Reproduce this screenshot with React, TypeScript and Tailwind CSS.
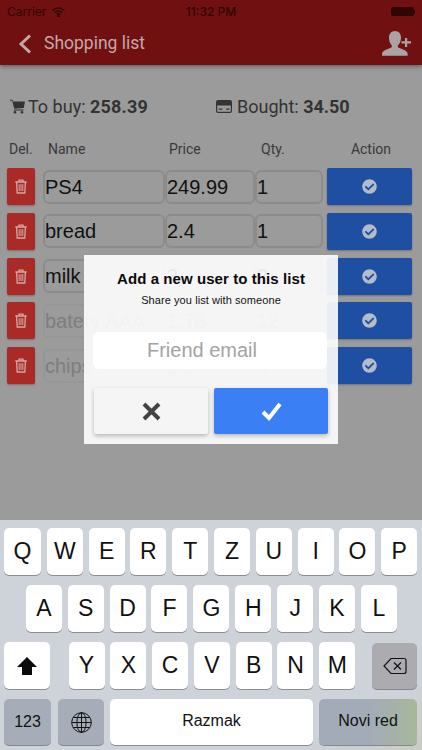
import React from "react";
import { FaCheckCircle } from "react-icons/fa";

const rows = [
  { name: "PS4", price: "249.99", qty: "1", done: false },
  { name: "bread", price: "2.4", qty: "1", done: false },
  { name: "milk", price: "3", qty: "2", done: false },
  { name: "batery AAA", price: "1.76", qty: "12", done: true },
  { name: "chips", price: "1.5", qty: "6", done: true },
];

function Trash() {
  return (
    <svg width="12" height="15" viewBox="0 0 12 15" fill="none" stroke="#d3aaa6" strokeWidth="1.3">
      <path d="M.3 3h11.4M4 3V1.2h4V3M1.6 3l.6 11h7.6l.6-11" />
      <path d="M4.2 5.2v6.8M6 5.2v6.8M7.8 5.2v6.8" strokeWidth="1" />
    </svg>
  );
}

function Cell({ w, text, done }: { w: string; text: string; done: boolean }) {
  return (
    <div
      className={`${w} h-[34px] shrink-0 overflow-hidden whitespace-nowrap rounded-[6px] border-2 text-[20px] leading-[30px] font-['Liberation_Sans',sans-serif] ${
        done ? "border-[#969696] text-[#7e7e7e]" : "border-[#8c8c8c] text-[#111111]"
      }`}
    >
      {text}
    </div>
  );
}

function Row({ name, price, qty, done }: { name: string; price: string; qty: string; done: boolean }) {
  return (
    <div className="flex h-[37px] items-center pl-[7px]">
      <div className="flex h-[37px] w-[28px] items-center justify-center rounded-[2px] bg-[#a92a26] shadow-[0_1px_2px_rgba(0,0,0,0.25)]">
        <Trash />
      </div>
      <div className="ml-[8px] flex">
        <Cell w="w-[122px]" text={name} done={done} />
        <Cell w="w-[90px]" text={price} done={done} />
        <Cell w="w-[68px]" text={qty} done={done} />
      </div>
      <div className="ml-[4px] flex h-[37px] w-[85px] items-center justify-center rounded-[2px] bg-[#1f4fa3] text-[#b4bbc9] shadow-[0_1px_2px_rgba(0,0,0,0.25)]">
        <FaCheckCircle size={15} />
      </div>
    </div>
  );
}

function Key({ label, w = "w-[36px]" }: { label: string; w?: string }) {
  return (
    <div className={`${w} flex h-[47px] items-center justify-center rounded-[5px] bg-white text-[23px] text-[#111] shadow-[0_1px_0_#8a8d92]`}>
      {label}
    </div>
  );
}

function GrayKey({ w, children }: { w: string; children: React.ReactNode }) {
  return (
    <div className={`${w} flex h-[46px] items-center justify-center rounded-[5px] bg-[#a6adb9] text-[#111] shadow-[0_1px_0_#85888d]`}>
      {children}
    </div>
  );
}

export default function App() {
  return (
    <div className="relative flex h-[750px] w-[422px] flex-col overflow-hidden bg-[#9b9b9b] font-['Roboto',sans-serif]">
      <header className="z-10 h-[65px] shrink-0 bg-[#701010] shadow-[0_2px_4px_rgba(0,0,0,0.35)]">
        <div className="flex h-[22px] items-center justify-between px-[7px] pt-[1px] font-['Inter',sans-serif] text-[12px] text-[#2e0606]">
          <div className="flex w-[120px] items-center gap-[6px]">
            <span>Carrier</span>
            <svg width="13" height="10" viewBox="0 0 13 10" fill="none" stroke="#2e0606" strokeWidth="1.6">
              <path d="M.8 3.4a8 8 0 0 1 11.4 0M2.8 5.5a5.2 5.2 0 0 1 7.4 0M4.8 7.4a2.4 2.4 0 0 1 3.4 0" />
              <circle cx="6.5" cy="9" r=".6" fill="#2e0606" />
            </svg>
          </div>
          <span className="font-medium">11:32 PM</span>
          <div className="flex w-[120px] items-center justify-end">
            <div className="h-[9px] w-[23px] rounded-[2px] bg-[#2e0606]" />
            <div className="h-[4px] w-[1px] bg-[#2e0606]" />
          </div>
        </div>
        <div className="flex h-[43px] items-center pl-[18px] pr-[11px] text-[#c4a8a8]">
          <svg width="14" height="20" viewBox="0 0 14 20" fill="none" stroke="#c4a8a8" strokeWidth="3">
            <path d="M12 1.5 3 10l9 8.5" />
          </svg>
          <span className="ml-[12px] text-[17.5px]">Shopping list</span>
          <svg width="29" height="25" viewBox="0 0 29 25" fill="#aaa3a3" className="ml-auto">
            <path d="M13 0c3.6 0 6 2.8 6 6.4 0 3-1 5.8-2.7 7.6-.9 1-.7 2.2.6 2.8 3.2 1.3 6.8 2.4 8.1 4.2.6 1 .7 2.3.7 3.8H0c0-1.5.1-2.8.7-3.8 1.3-1.8 4.9-2.9 8.1-4.2 1.3-.6 1.5-1.8.6-2.8C7.8 12.2 7 9.4 7 6.4 7 2.8 9.4 0 13 0z" />
            <path d="M23 7h2.2v3.300H29v2.300h-3.800V16H23v-3.400h-3.500v-2.300H23z" />
          </svg>
        </div>
      </header>

      <div className="flex h-[66px] shrink-0 items-center pl-[10px] pt-[17px] text-[18px] text-[#333]">
        <div className="flex w-[206px] items-center">
          <svg width="15" height="15" viewBox="0 0 15 15" fill="#333" className="mr-[3px]">
            <path d="M0 .5 2.500 1l.6 1.500H15l-1.200 6.500-9.500.8L2.200 2 0 1.500z" />
            <path d="M4 10.500h9.500v1H3.500z" />
            <circle cx="5" cy="13.300" r="1.300" />
            <circle cx="12" cy="13.300" r="1.300" />
          </svg>
          <span>
            To buy: <b className="font-bold tracking-[0.2px]">258.39</b>
          </span>
        </div>
        <div className="flex items-center">
          <svg width="16" height="13" viewBox="0 0 16 13" className="mr-[5px]">
            <rect x=".6" y=".6" width="14.800" height="11.800" rx="1.500" fill="none" stroke="#333" strokeWidth="1.200" />
            <rect x="1" y="1" width="14" height="4.500" fill="#333" />
            <rect x="2.500" y="8.500" width="4" height="1.200" fill="#333" />
            <rect x="10" y="8.500" width="3.500" height="1.200" fill="#333" />
          </svg>
          <span>
            Bought: <b className="font-bold">34.50</b>
          </span>
        </div>
      </div>

      <div className="flex h-[37px] shrink-0 items-center text-[14px] text-[#393939]">
        <span className="ml-[9px] w-[39px]">Del.</span>
        <span className="w-[121px]">Name</span>
        <span className="w-[92px]">Price</span>
        <span className="w-[62px]">Qty.</span>
        <span className="w-[96px] text-center">Action</span>
      </div>

      <div className="flex flex-col gap-[7.8px]">
        {rows.map((r) => (
          <Row key={r.name} {...r} />
        ))}
      </div>

      <div className="mt-auto shrink-0 bg-gradient-to-br from-[#ced2d9] via-[#ced2d9] via-85% to-[#c9ccc4] pt-[8px] pb-[5px] font-['Liberation_Sans',sans-serif]">
        <div className="flex gap-[5.8px] pl-[4px]">
          {"QWERTZUIOP".split("").map((k) => (
            <Key key={k} label={k} w={k === "Q" ? "w-[37px]" : "w-[36px]"} />
          ))}
        </div>
        <div className="mt-[10px] flex gap-[5.9px] pl-[25.800px]">
          {"ASDFGHJKL".split("").map((k) => (
            <Key key={k} label={k} />
          ))}
        </div>
        <div className="mt-[10px] flex items-center pl-[4px] pr-[5px]">
          <div className="flex h-[47px] w-[46px] items-center justify-center rounded-[5px] bg-white shadow-[0_1px_0_#8a8d92]">
            <svg width="20" height="18" viewBox="0 0 20 18" fill="#0b0b0b">
              <path d="M10 0 20 10h-5v8H5v-8H0z" />
            </svg>
          </div>
          <div className="ml-[18.500px] flex gap-[5.800px]">
            {"YXCVBNM".split("").map((k) => (
              <Key key={k} label={k} />
            ))}
          </div>
          <div className="ml-auto flex h-[46px] w-[45px] items-center justify-center rounded-[5px] bg-[#acacb0] shadow-[0_1px_0_#85888d]">
            <svg width="24" height="18" viewBox="0 0 24 18" fill="none" stroke="#111" strokeWidth="1.2">
              <path d="M8 1.500h13a2 2 0 0 1 2 2v11a2 2 0 0 1-2 2H8L1 9z" />
              <path d="m11 5.500 7 7m0-7-7 7" />
            </svg>
          </div>
        </div>
        <div className="mt-[10px] flex pl-[4px] pr-[5px]">
          <GrayKey w="w-[47px]">
            <span className="text-[16px]">123</span>
          </GrayKey>
          <div className="ml-[7px]">
            <GrayKey w="w-[46px]">
              <svg width="21" height="21" viewBox="0 0 21 21" fill="none" stroke="#111" strokeWidth="1">
                <circle cx="10.500" cy="10.500" r="9.800" />
                <ellipse cx="10.500" cy="10.500" rx="4.600" ry="9.800" />
                <path d="M10.500.7v19.600M.7 10.500h19.600M2.200 5.500h16.600M2.200 15.500h16.600" />
              </svg>
            </GrayKey>
          </div>
          <div className="ml-[6px] flex h-[46px] w-[203px] items-center justify-center rounded-[5px] bg-white pb-[2px] text-[16px] text-[#111] shadow-[0_1px_0_#8a8d92]">
            Razmak
          </div>
          <div className="ml-[6px] flex h-[46px] w-[98px] items-center justify-center rounded-[5px] bg-gradient-to-r from-[#a4abb8] via-[#a4abb8] via-50% to-[#a7b79a] pb-[2px] text-[16px] text-[#111] shadow-[0_1px_0_#85888d]">
            Novi red
          </div>
        </div>
      </div>

      <div className="absolute left-[84px] top-[255px] flex h-[189px] w-[254px] flex-col items-center bg-white/90">
        <h2 className="mt-[14px] font-['Liberation_Sans',sans-serif] text-[15px] font-bold leading-[20px] tracking-[0.08px] text-[#0a0a0a]">
          Add a new user to this list
        </h2>
        <p className="mt-[3px] font-['Liberation_Sans',sans-serif] text-[11px] leading-[16px] tracking-[0.08px] text-[#111]">
          Share you list with someone
        </p>
        <div className="mt-[24px] ml-[9px] flex h-[37px] w-[234px] items-center justify-center self-start rounded-[6px] bg-white pb-[2px] pr-[16px] font-['Liberation_Sans',sans-serif] text-[20px] text-[#a3a3a3]">
          Friend email
        </div>
        <div className="mt-[19px] flex w-[234px] gap-[6px]">
          <div className="flex h-[46px] w-[114px] items-center justify-center rounded-[2px] bg-[#f5f5f5] shadow-[0_2px_4px_rgba(0,0,0,0.25)]">
            <svg width="19" height="19" viewBox="0 0 19 19" fill="none" stroke="#444" strokeWidth="4">
              <path d="m2 2 15 15M17 2 2 17" />
            </svg>
          </div>
          <div className="flex h-[46px] w-[114px] items-center justify-center rounded-[2px] bg-[#3b7ff5] shadow-[0_2px_4px_rgba(0,0,0,0.25)]">
            <svg width="21" height="19" viewBox="0 0 21 19" fill="none" stroke="#fff" strokeWidth="4">
              <path d="m2 10 6 6L19 2" />
            </svg>
          </div>
        </div>
      </div>
    </div>
  );
}
